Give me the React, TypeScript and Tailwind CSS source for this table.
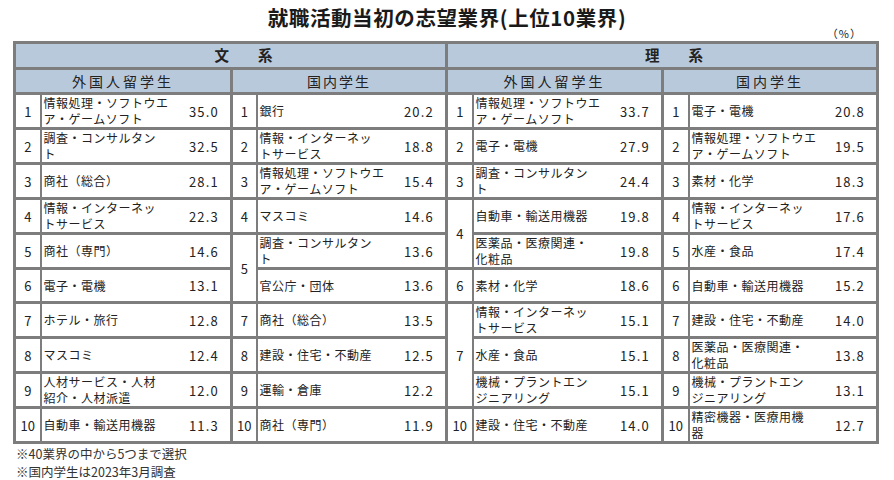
import React from "react";

type E = { r?: number | null; span?: number; n: string[]; v: string };

const g1: E[] = [
  { r: 1, n: ["情報処理・ソフトウエ", "ア・ゲームソフト"], v: "35.0" },
  { r: 2, n: ["調査・コンサルタン", "ト"], v: "32.5" },
  { r: 3, n: ["商社（総合）"], v: "28.1" },
  { r: 4, n: ["情報・インターネッ", "トサービス"], v: "22.3" },
  { r: 5, n: ["商社（専門）"], v: "14.6" },
  { r: 6, n: ["電子・電機"], v: "13.1" },
  { r: 7, n: ["ホテル・旅行"], v: "12.8" },
  { r: 8, n: ["マスコミ"], v: "12.4" },
  { r: 9, n: ["人材サービス・人材", "紹介・人材派遣"], v: "12.0" },
  { r: 10, n: ["自動車・輸送用機器"], v: "11.3" },
];
const g2: E[] = [
  { r: 1, n: ["銀行"], v: "20.2" },
  { r: 2, n: ["情報・インターネッ", "トサービス"], v: "18.8" },
  { r: 3, n: ["情報処理・ソフトウエ", "ア・ゲームソフト"], v: "15.4" },
  { r: 4, n: ["マスコミ"], v: "14.6" },
  { r: 5, span: 2, n: ["調査・コンサルタン", "ト"], v: "13.6" },
  { r: null, n: ["官公庁・団体"], v: "13.6" },
  { r: 7, n: ["商社（総合）"], v: "13.5" },
  { r: 8, n: ["建設・住宅・不動産"], v: "12.5" },
  { r: 9, n: ["運輸・倉庫"], v: "12.2" },
  { r: 10, n: ["商社（専門）"], v: "11.9" },
];
const g3: E[] = [
  { r: 1, n: ["情報処理・ソフトウエ", "ア・ゲームソフト"], v: "33.7" },
  { r: 2, n: ["電子・電機"], v: "27.9" },
  { r: 3, n: ["調査・コンサルタン", "ト"], v: "24.4" },
  { r: 4, span: 2, n: ["自動車・輸送用機器"], v: "19.8" },
  { r: null, n: ["医薬品・医療関連・", "化粧品"], v: "19.8" },
  { r: 6, n: ["素材・化学"], v: "18.6" },
  { r: 7, span: 3, n: ["情報・インターネッ", "トサービス"], v: "15.1" },
  { r: null, n: ["水産・食品"], v: "15.1" },
  { r: null, n: ["機械・プラントエン", "ジニアリング"], v: "15.1" },
  { r: 10, n: ["建設・住宅・不動産"], v: "14.0" },
];
const g4: E[] = [
  { r: 1, n: ["電子・電機"], v: "20.8" },
  { r: 2, n: ["情報処理・ソフトウエ", "ア・ゲームソフト"], v: "19.5" },
  { r: 3, n: ["素材・化学"], v: "18.3" },
  { r: 4, n: ["情報・インターネッ", "トサービス"], v: "17.6" },
  { r: 5, n: ["水産・食品"], v: "17.4" },
  { r: 6, n: ["自動車・輸送用機器"], v: "15.2" },
  { r: 7, n: ["建設・住宅・不動産"], v: "14.0" },
  { r: 8, n: ["医薬品・医療関連・", "化粧品"], v: "13.8" },
  { r: 9, n: ["機械・プラントエン", "ジニアリング"], v: "13.1" },
  { r: 10, n: ["精密機器・医療用機", "器"], v: "12.7" },
];

const groups = [g1, g2, g3, g4];

function Cells({ e }: { e: E }) {
  return (
    <>
      {e.r !== null && (
        <td
          rowSpan={e.span || 1}
          className="border-y-[3px] border-l-[3px] border-r-2 border-[#7d7d7d] text-center align-middle text-[13px] leading-none"
        >
          {e.r}
        </td>
      )}
      <td className="border-y-[3px] border-r-[3px] border-l-2 border-[#7d7d7d] align-middle p-0">
        <div className="flex items-center justify-between pl-[2px] pr-[11px]">
          <div className="text-[12px] leading-[16px] tracking-[0.5px] whitespace-nowrap">
            {e.n.map((l, i) => (
              <div key={i}>{l}</div>
            ))}
          </div>
          <div className="text-[13px] tracking-[1.2px] leading-none">{e.v}</div>
        </div>
      </td>
    </>
  );
}

export default function App() {
  return (
    <div
      className="w-[894px] h-[480px] bg-white text-[#222]"
      style={{ fontFamily: '"Noto Sans CJK JP", "Noto Sans", sans-serif' }}
    >
      <div className="h-[32px] flex items-center justify-center pt-[2px] text-[20.5px] font-bold tracking-[0.6px] text-[#1a1a1a]">
        就職活動当初の志望業界(上位10業界)
      </div>
      <div className="h-[9px] relative">
        <span className="absolute right-[32px] top-[-4px] text-[11px] leading-none tracking-[1px]">（%）</span>
      </div>
      <table className="ml-[13px] w-[863px] table-fixed border-collapse">
        <colgroup>
          <col className="w-[26px]" />
          <col className="w-[191px]" />
          <col className="w-[25px]" />
          <col className="w-[190px]" />
          <col className="w-[26px]" />
          <col className="w-[190px]" />
          <col className="w-[26px]" />
          <col className="w-[189px]" />
        </colgroup>
        <thead>
          <tr className="h-[26px] bg-[#b9c9dc]">
            <th colSpan={4} className="border-[3px] border-[#7d7d7d] pl-[26px] text-[14.5px] font-bold leading-none">
              文　　系
            </th>
            <th colSpan={4} className="border-[3px] border-[#7d7d7d] pl-[24px] text-[14.5px] font-bold leading-none">
              理　　系
            </th>
          </tr>
          <tr className="h-[25px] bg-[#b9c9dc]">
            <th colSpan={2} className="border-[3px] border-[#7d7d7d] text-[14px] font-normal tracking-[3px] leading-none">
              外国人留学生
            </th>
            <th colSpan={2} className="border-[3px] border-[#7d7d7d] text-[14px] font-normal tracking-[2px] leading-none">
              国内学生
            </th>
            <th colSpan={2} className="border-[3px] border-[#7d7d7d] text-[14px] font-normal tracking-[3px] leading-none">
              外国人留学生
            </th>
            <th colSpan={2} className="border-[3px] border-[#7d7d7d] text-[14px] font-normal tracking-[3px] leading-none">
              国内学生
            </th>
          </tr>
        </thead>
        <tbody>
          {Array.from({ length: 10 }).map((_, r) => (
            <tr key={r} className="h-[34px]">
              {groups.map((g, gi) => (
                <Cells key={gi} e={g[r]} />
              ))}
            </tr>
          ))}
        </tbody>
      </table>
      <div className="pl-[16px] pt-px text-[12.5px] leading-[18px] text-[#333]">
        <div>※40業界の中から5つまで選択</div>
        <div>※国内学生は2023年3月調査</div>
      </div>
    </div>
  );
}
